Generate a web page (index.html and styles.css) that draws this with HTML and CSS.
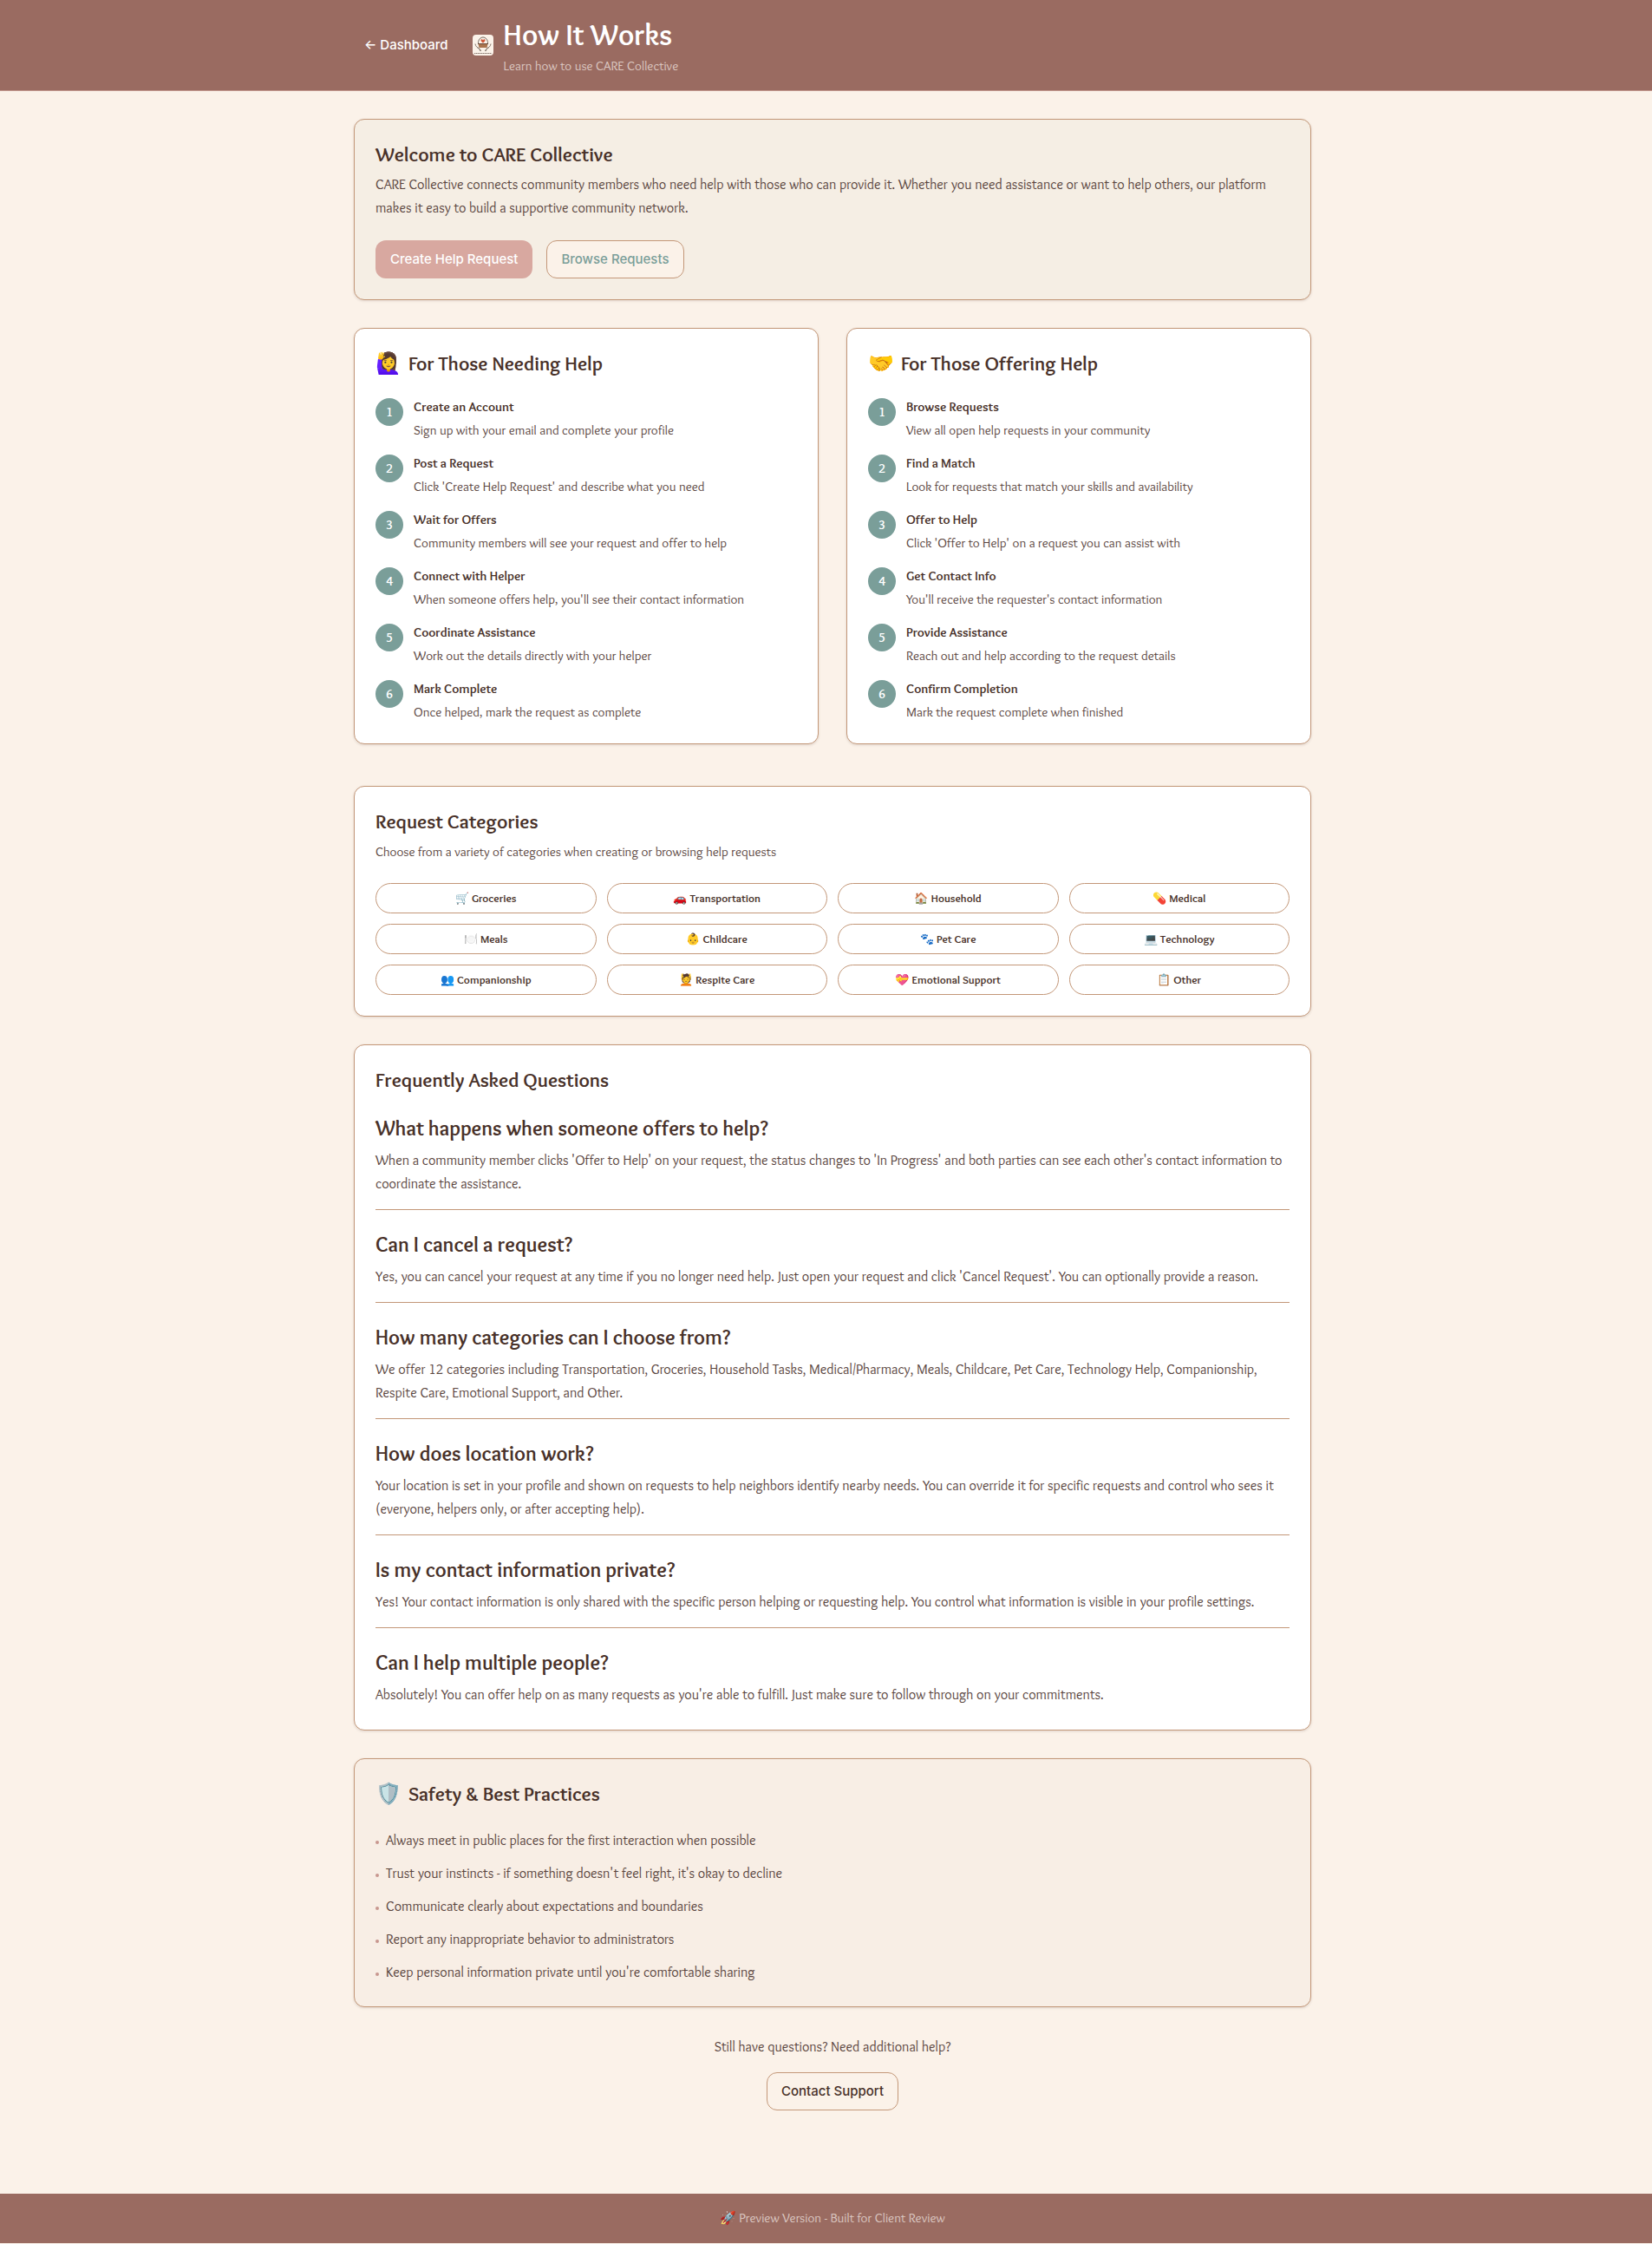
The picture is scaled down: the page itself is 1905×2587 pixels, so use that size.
FILE: index.html
```html
<!DOCTYPE html>
<html lang="en">
<head>
<meta charset="utf-8">
<meta name="viewport" content="width=device-width, initial-scale=1">
<title>How It Works - CARE Collective</title>
<link rel="stylesheet" href="styles.css">
</head>
<body>
<header class="site-header">
  <div class="container header-row">
    <a class="back-link" href="#dashboard">← Dashboard</a>
    <div class="brand">
      <svg class="logo" viewBox="0 0 48 48" aria-hidden="true">
        <rect width="48" height="48" rx="8" fill="#fbf2e9"/>
        <path d="M13 21C12 1 36 1 35 21" fill="none" stroke="#75695f" stroke-width="2"/>
        <path d="M24 19c-9-6-4-11 0-7 4-4 9 1 0 7z" fill="#cf5a3c"/>
        <path d="M13 21h22l-2 9H15z" fill="#a9744f"/>
        <path d="M12 21h24" stroke="#6b4a3a" stroke-width="2"/>
        <path d="M6 21c1 7 5 8 9 11l3 6M11 30c4 1 7 4 8 8M42 21c-1 7-5 8-9 11l-3 6M37 30c-4 1-7 4-8 8" fill="none" stroke="#85786d" stroke-width="2"/>
        <path d="M4 43h40" stroke="#8b7a70" stroke-width="2" stroke-dasharray="3 1"/>
      </svg>
      <div>
        <h1 class="page-title">How It Works</h1>
        <p class="page-subtitle">Learn how to use CARE Collective</p>
      </div>
    </div>
  </div>
</header>

<main class="page-main">
  <div class="container">
    <section class="card card-welcome">
      <h2 class="card-title">Welcome to CARE Collective</h2>
      <p class="body-text intro">CARE Collective connects community members who need help with those who can provide it. Whether you need assistance or want to help others, our platform makes it easy to build a supportive community network.</p>
      <div class="actions">
        <a class="btn btn-primary" href="#create">Create Help Request</a>
        <a class="btn btn-outline btn-sage" href="#browse">Browse Requests</a>
      </div>
    </section>

    <div class="guides">
      <section class="card">
        <h2 class="card-title icon-title"><span class="emoji">🙋‍♀️</span>For Those Needing Help</h2>
        <ol class="steps">
          <li class="step"><span class="step-number">1</span><div><h3 class="step-title">Create an Account</h3><p class="step-text">Sign up with your email and complete your profile</p></div></li>
          <li class="step"><span class="step-number">2</span><div><h3 class="step-title">Post a Request</h3><p class="step-text">Click 'Create Help Request' and describe what you need</p></div></li>
          <li class="step"><span class="step-number">3</span><div><h3 class="step-title">Wait for Offers</h3><p class="step-text">Community members will see your request and offer to help</p></div></li>
          <li class="step"><span class="step-number">4</span><div><h3 class="step-title">Connect with Helper</h3><p class="step-text">When someone offers help, you'll see their contact information</p></div></li>
          <li class="step"><span class="step-number">5</span><div><h3 class="step-title">Coordinate Assistance</h3><p class="step-text">Work out the details directly with your helper</p></div></li>
          <li class="step"><span class="step-number">6</span><div><h3 class="step-title">Mark Complete</h3><p class="step-text">Once helped, mark the request as complete</p></div></li>
        </ol>
      </section>
      <section class="card">
        <h2 class="card-title icon-title"><span class="emoji">🤝</span>For Those Offering Help</h2>
        <ol class="steps">
          <li class="step"><span class="step-number">1</span><div><h3 class="step-title">Browse Requests</h3><p class="step-text">View all open help requests in your community</p></div></li>
          <li class="step"><span class="step-number">2</span><div><h3 class="step-title">Find a Match</h3><p class="step-text">Look for requests that match your skills and availability</p></div></li>
          <li class="step"><span class="step-number">3</span><div><h3 class="step-title">Offer to Help</h3><p class="step-text">Click 'Offer to Help' on a request you can assist with</p></div></li>
          <li class="step"><span class="step-number">4</span><div><h3 class="step-title">Get Contact Info</h3><p class="step-text">You'll receive the requester's contact information</p></div></li>
          <li class="step"><span class="step-number">5</span><div><h3 class="step-title">Provide Assistance</h3><p class="step-text">Reach out and help according to the request details</p></div></li>
          <li class="step"><span class="step-number">6</span><div><h3 class="step-title">Confirm Completion</h3><p class="step-text">Mark the request complete when finished</p></div></li>
        </ol>
      </section>
    </div>

    <section class="card">
      <h2 class="card-title">Request Categories</h2>
      <p class="card-description">Choose from a variety of categories when creating or browsing help requests</p>
      <ul class="categories">
        <li class="pill">🛒 Groceries</li>
        <li class="pill">🚗 Transportation</li>
        <li class="pill">🏠 Household</li>
        <li class="pill">💊 Medical</li>
        <li class="pill">🍽️ Meals</li>
        <li class="pill">👶 Childcare</li>
        <li class="pill">🐾 Pet Care</li>
        <li class="pill">💻 Technology</li>
        <li class="pill">👥 Companionship</li>
        <li class="pill">💆 Respite Care</li>
        <li class="pill">💝 Emotional Support</li>
        <li class="pill">📋 Other</li>
      </ul>
    </section>

    <section class="card">
      <h2 class="card-title">Frequently Asked Questions</h2>
      <div class="faq">
        <article class="faq-item"><h3 class="question">What happens when someone offers to help?</h3><p class="body-text">When a community member clicks 'Offer to Help' on your request, the status changes to 'In Progress' and both parties can see each other's contact information to coordinate the assistance.</p></article>
        <article class="faq-item"><h3 class="question">Can I cancel a request?</h3><p class="body-text">Yes, you can cancel your request at any time if you no longer need help. Just open your request and click 'Cancel Request'. You can optionally provide a reason.</p></article>
        <article class="faq-item"><h3 class="question">How many categories can I choose from?</h3><p class="body-text">We offer 12 categories including Transportation, Groceries, Household Tasks, Medical/Pharmacy, Meals, Childcare, Pet Care, Technology Help, Companionship, Respite Care, Emotional Support, and Other.</p></article>
        <article class="faq-item"><h3 class="question">How does location work?</h3><p class="body-text">Your location is set in your profile and shown on requests to help neighbors identify nearby needs. You can override it for specific requests and control who sees it (everyone, helpers only, or after accepting help).</p></article>
        <article class="faq-item"><h3 class="question">Is my contact information private?</h3><p class="body-text">Yes! Your contact information is only shared with the specific person helping or requesting help. You control what information is visible in your profile settings.</p></article>
        <article class="faq-item"><h3 class="question">Can I help multiple people?</h3><p class="body-text">Absolutely! You can offer help on as many requests as you're able to fulfill. Just make sure to follow through on your commitments.</p></article>
      </div>
    </section>

    <section class="card card-safety">
      <h2 class="card-title icon-title"><span class="emoji">🛡️</span>Safety &amp; Best Practices</h2>
      <ul class="tips">
        <li class="tip body-text">Always meet in public places for the first interaction when possible</li>
        <li class="tip body-text">Trust your instincts - if something doesn't feel right, it's okay to decline</li>
        <li class="tip body-text">Communicate clearly about expectations and boundaries</li>
        <li class="tip body-text">Report any inappropriate behavior to administrators</li>
        <li class="tip body-text">Keep personal information private until you're comfortable sharing</li>
      </ul>
    </section>

    <section class="support">
      <p class="body-text">Still have questions? Need additional help?</p>
      <a class="btn btn-outline" href="#support">Contact Support</a>
    </section>
  </div>
</main>

<footer class="site-footer">🚀 Preview Version - Built for Client Review</footer>
</body>
</html>
```
FILE: styles.css
```css
:root {
  --cream: #fbf2e9;
  --clay: #9a6b61;
  --tan: #c39778;
  --ink: #483129;
  --ink-soft: #5a453e;
  --sage: #7a9e99;
  --rose: #d8a8a0;
  --gutter: 15px;
  --humanist: Overlock, Lato, "Noto Color Emoji", sans-serif;
}

* {
  box-sizing: border-box;
}

body {
  margin: 0;
  background: var(--cream);
  color: var(--ink);
  font-family: var(--humanist);
  font-size: 16px;
  line-height: 27px;
}

h1, h2, h3, p, ol, ul {
  margin: 0;
  padding: 0;
}

ol, ul {
  list-style: none;
}

a {
  text-decoration: none;
}

.container {
  max-width: 1104px;
  margin: 0 auto;
}

/* Header */
.site-header {
  padding: 16px 0 16px var(--gutter);
  background: var(--clay);
  border-bottom: 1px solid #c39a90;
  color: #fff;
}

.header-row,
.brand {
  display: flex;
  align-items: center;
}

.header-row {
  gap: 16px;
}

.brand {
  gap: 12px;
}

.back-link {
  padding: 0 12px;
  color: #fff;
  font: 500 15px/44px Inter, sans-serif;
}

.logo {
  width: 24px;
  height: 24px;
}

.page-title {
  font-size: 34px;
  font-weight: 700;
  line-height: 48px;
}

.page-subtitle {
  color: #dcc8c2;
  font-size: 15px;
  line-height: 24px;
}

/* Cards */
.page-main {
  padding: 32px 0 96px var(--gutter);
}

.card {
  margin-bottom: 32px;
  padding: 24px;
  background: #fff;
  border: 1px solid var(--tan);
  border-radius: 12px;
  box-shadow: 0 1px 3px rgba(72, 49, 41, 0.16);
}

.card-welcome {
  background: #f5eee4;
}

.card-safety {
  background: #f8eee5;
}

.card-title {
  font-size: 23px;
  font-weight: 700;
  line-height: 32px;
}

.icon-title {
  display: flex;
  gap: 8px;
}

.emoji {
  font-size: 24px;
}

.body-text {
  color: var(--ink-soft);
}

.intro {
  margin: 5px 0 24px;
}

.actions {
  display: flex;
  gap: 16px;
}

.btn {
  display: inline-block;
  padding: 0 16px;
  border: 1px solid transparent;
  border-radius: 12px;
  color: var(--ink);
  font: 500 15px/42px Inter, sans-serif;
}

.btn-primary {
  background: var(--rose);
  color: #fff;
}

.btn-outline {
  background: var(--cream);
  border-color: var(--tan);
}

.btn-sage {
  color: var(--sage);
}

/* Step guides */
.guides {
  display: grid;
  grid-template-columns: 1fr 1fr;
  gap: 32px;
  margin-bottom: 48px;
}

.guides .card {
  margin-bottom: 0;
}

.steps {
  display: grid;
  gap: 16px;
  margin-top: 24px;
}

.step {
  display: flex;
  gap: 12px;
}

.step-number {
  width: 32px;
  height: 32px;
  border-radius: 50%;
  background: var(--sage);
  color: #fff;
  font-size: 15px;
  font-weight: 700;
  line-height: 32px;
  text-align: center;
}

.step-title {
  margin-bottom: 4px;
  font-size: 15px;
  font-weight: 700;
  line-height: 21px;
}

.step-text,
.card-description {
  color: var(--ink-soft);
  font-size: 15px;
  line-height: 24px;
}

/* Categories */
.card-description {
  margin: 7px 0 24px;
}

.categories {
  display: grid;
  grid-template-columns: repeat(4, 1fr);
  gap: 12px;
}

.pill {
  border: 1px solid var(--tan);
  border-radius: 18px;
  font-size: 13px;
  font-weight: 700;
  line-height: 33px;
  text-align: center;
}

/* FAQ */
.faq {
  display: grid;
  gap: 24px;
  margin: 24px 0 3px;
}

.faq-item:not(:last-child) {
  padding-bottom: 16px;
  border-bottom: 1px solid var(--tan);
}

.question {
  margin-bottom: 7px;
  font-size: 24px;
  font-weight: 700;
  line-height: 32px;
}

/* Safety tips */
.tips {
  display: grid;
  gap: 11px;
  margin: 24px 0 2px;
}

.tip {
  display: flex;
  align-items: center;
  gap: 8px;
}

.tip::before {
  content: "";
  width: 4px;
  height: 4px;
  margin-top: 4px;
  border-radius: 50%;
  background: #c8978f;
}

.support {
  display: flex;
  flex-direction: column;
  align-items: center;
  gap: 16px;
}

/* Footer */
.site-footer {
  margin-bottom: 1px;
  padding: 16px 0 17px var(--gutter);
  background: var(--clay);
  color: #dcc8c2;
  font-size: 15px;
  line-height: 24px;
  text-align: center;
}
```
